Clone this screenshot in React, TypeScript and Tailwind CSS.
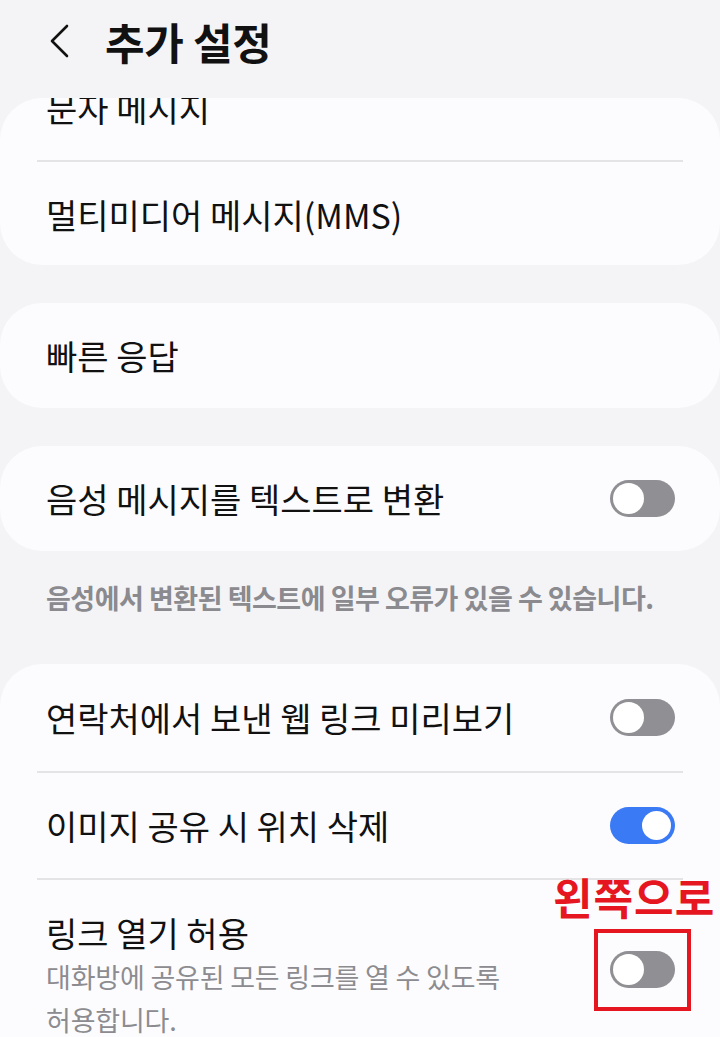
import React from "react";

const font = { fontFamily: '"Noto Sans CJK KR", "Noto Sans", sans-serif' };

function Toggle({ on }: { on: boolean }) {
  return on ? (
    <div className="w-[65px] h-[37px] rounded-full bg-[#3b7af5] flex items-center justify-end pr-[4px] shrink-0">
      <div className="w-[29px] h-[29px] rounded-full bg-white" />
    </div>
  ) : (
    <div className="w-[65px] h-[37px] rounded-full bg-[#8f8f94] flex items-center justify-start pl-[3px] shrink-0">
      <div className="w-[31px] h-[31px] rounded-full bg-white" />
    </div>
  );
}

function Row({ label, toggle }: { label: string; toggle?: boolean }) {
  return (
    <div className="h-[105px] flex items-center justify-between pl-[46px] pr-[45px]">
      <span className="text-[34px] leading-[44px] text-[#111] tracking-[0px]">{label}</span>
      {toggle !== undefined && <Toggle on={toggle} />}
    </div>
  );
}

function Divider() {
  return <div className="mx-[37px] h-[2px] bg-[#e4e4e6]" />;
}

export default function App() {
  return (
    <div className="w-[720px] h-[1037px] bg-[#f4f4f6] overflow-hidden relative" style={font}>
      <div className="h-[98px]">
        <div className="h-[82px] flex items-center pl-[48px]">
          <svg width="24" height="34" viewBox="0 0 24 34" fill="none">
            <path d="M19 2 L4 17 L19 32" stroke="#111" strokeWidth="2.6" strokeLinecap="round" strokeLinejoin="round" />
          </svg>
          <span className="ml-[33px] text-[43px] leading-[52px] font-bold text-[#111] tracking-[-0.3px]">추가 설정</span>
        </div>
      </div>

      <div className="rounded-[42px] bg-[#fcfcfe] h-[167px] overflow-hidden">
        <div className="-mt-[43px]">
          <Row label="문자 메시지" />
          <Divider />
          <Row label="멀티미디어 메시지(MMS)" />
        </div>
      </div>

      <div className="mt-[38px] rounded-[42px] bg-[#fcfcfe]">
        <Row label="빠른 응답" />
      </div>

      <div className="mt-[38px] rounded-[42px] bg-[#fcfcfe]">
        <Row label="음성 메시지를 텍스트로 변환" toggle={false} />
      </div>

      <div className="h-[113px] pl-[46px] pt-[29px]">
        <span className="text-[27px] leading-[36px] font-bold text-[#8a8a8f] tracking-[-0.5px]">
          음성에서 변환된 텍스트에 일부 오류가 있을 수 있습니다.
        </span>
      </div>

      <div className="rounded-[42px] bg-[#fcfcfe] pb-[40px]">
        <div className="h-[107px] flex items-center justify-between pl-[46px] pr-[45px]">
          <span className="text-[34px] leading-[44px] text-[#111] tracking-[0px]">연락처에서 보낸 웹 링크 미리보기</span>
          <Toggle on={false} />
        </div>
        <Divider />
        <Row label="이미지 공유 시 위치 삭제" toggle={true} />
        <Divider />
        <div className="flex items-start justify-between pl-[46px] pr-[45px] pt-[31px]">
          <div className="flex flex-col">
            <span className="text-[34px] leading-[44px] text-[#111] tracking-[0px]">링크 열기 허용</span>
            <span className="text-[27px] leading-[43px] text-[#8c8c90] tracking-[-0.2px] w-[490px] break-keep">
              대화방에 공유된 모든 링크를 열 수 있도록 허용합니다.
            </span>
          </div>
          <div className="mt-[40px]">
            <Toggle on={false} />
          </div>
        </div>
      </div>

      <div className="absolute left-[553px] top-[868px] text-[43px] font-bold text-[#e5161f] tracking-[1px] leading-[56px]">
        왼쪽으로
      </div>
      <div className="absolute left-[594px] top-[929px] w-[97px] h-[82px] border-[4px] border-[#e5161f]" />
    </div>
  );
}
